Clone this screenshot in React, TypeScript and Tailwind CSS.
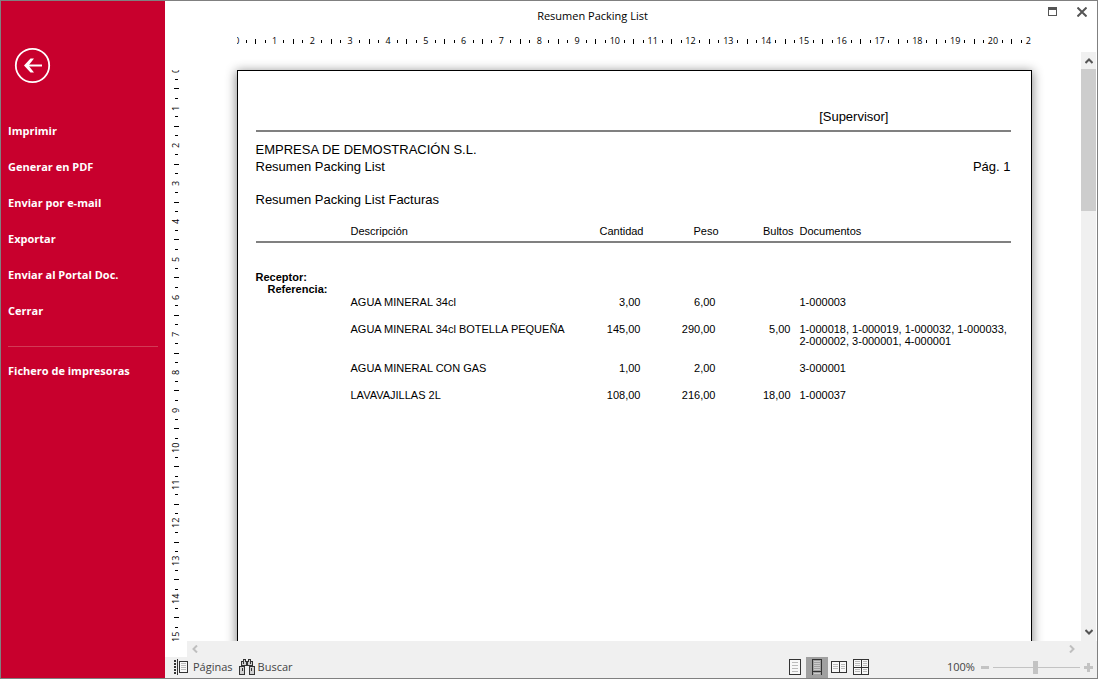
import React from "react";

const MENU = ["Imprimir", "Generar en PDF", "Enviar por e-mail", "Exportar", "Enviar al Portal Doc.", "Cerrar"];

const ROWS = [
  { desc: "AGUA MINERAL 34cl", cant: "3,00", peso: "6,00", bultos: "", docs: "1-000003" },
  {
    desc: "AGUA MINERAL 34cl BOTELLA PEQUEÑA",
    cant: "145,00",
    peso: "290,00",
    bultos: "5,00",
    docs: "1-000018, 1-000019, 1-000032, 1-000033, 2-000002, 3-000001, 4-000001",
  },
  { desc: "AGUA MINERAL CON GAS", cant: "1,00", peso: "2,00", bultos: "", docs: "3-000001" },
  { desc: "LAVAVAJILLAS 2L", cant: "108,00", peso: "216,00", bultos: "18,00", docs: "1-000037" },
];

function MenuItem({ label }: { label: string }) {
  return (
    <button type="button" className="block h-9 w-full pl-[7px] text-left text-[11px] font-bold text-white">
      {label}
    </button>
  );
}

function Sidebar() {
  return (
    <aside className="w-[164px] shrink-0 bg-[#c8002d] pt-[46px]">
      <button type="button" aria-label="Volver" className="ml-[13px] block">
        <svg width="37" height="37" viewBox="0 0 37 37" fill="none" stroke="#fff">
          <circle cx="18.5" cy="18.5" r="16.7" strokeWidth="1.8" />
          <path d="M12 18.5H28" strokeWidth="2" />
          <path d="M10 18.5L16.5 11.5H20L14.5 18.5L20 25.5H16.5Z" fill="#fff" stroke="none" />
        </svg>
      </button>
      <nav className="mt-[29px]">
        {MENU.map((m) => (
          <MenuItem key={m} label={m} />
        ))}
        <hr className="mx-[7px] mt-[17px] mb-1.5 border-[#d23a55]" />
        <MenuItem label="Fichero de impresoras" />
      </nav>
    </aside>
  );
}

const CENTIMETRES = Array.from({ length: 30 }, (_, i) => i);

function HorizontalRuler() {
  return (
    <div className="flex h-[21px] shrink-0 justify-center pr-4 pl-[22px]">
      <div className="w-[794px] shrink-0 overflow-hidden">
        <div className="-ml-[5px] flex h-5 w-[832px] text-[9px]">
          {CENTIMETRES.slice(0, 22).map((n) => (
            <div key={n} className="grid flex-1 grid-cols-4 items-center justify-items-center">
              <span className="flex w-0 justify-center">{n}</span>
              <i className="h-[3px] w-px bg-black" />
              <i className="h-[5px] w-px bg-black" />
              <i className="h-[3px] w-px bg-black" />
            </div>
          ))}
        </div>
      </div>
    </div>
  );
}

function VerticalRuler() {
  return (
    <div className="w-[22px] shrink-0 overflow-hidden pt-[18px]">
      <div className="h-full overflow-hidden">
        <div className="-mt-[5px] flex h-[1134px] flex-col text-[9px]">
          {CENTIMETRES.map((n) => (
            <div key={n} className="grid flex-1 grid-rows-4 items-center justify-items-center">
              <span className="flex h-0 rotate-180 justify-center [writing-mode:vertical-rl]">{n}</span>
              <i className="h-px w-[3px] bg-black" />
              <i className="h-px w-[5px] bg-black" />
              <i className="h-px w-[3px] bg-black" />
            </div>
          ))}
        </div>
      </div>
    </div>
  );
}

function Report() {
  return (
    <article className="h-[1123px] w-[795px] shrink-0 border border-black bg-white pt-[38px] pr-5 pl-[18px] font-['Liberation_Sans',Arial,sans-serif] text-[13px] leading-4 text-black shadow-[0_2px_10px_1px_rgba(0,0,0,0.45)]">
      <p className="pr-[122px] text-right">[Supervisor]</p>
      <hr className="mt-[5px] border-t-2 border-[#808080]" />
      <p className="mt-[10px]">EMPRESA DE DEMOSTRACIÓN S.L.</p>
      <div className="mt-px flex justify-between">
        <h2>Resumen Packing List</h2>
        <p>Pág. 1</p>
      </div>
      <h3 className="mt-[17px]">Resumen Packing List Facturas</h3>
      <table className="mt-[17px] w-full table-fixed border-collapse text-[11px] leading-3">
        <colgroup>
          <col className="w-[95px]" />
          <col className="w-[226px]" />
          <col className="w-[67px]" />
          <col className="w-[75px]" />
          <col className="w-[75px]" />
          <col />
        </colgroup>
        <thead>
          <tr className="border-b-2 border-[#808080]">
            <th className="p-0" />
            <th className="p-0 pb-1 text-left font-normal">Descripción</th>
            <th className="p-0 pb-1 text-right font-normal">Cantidad</th>
            <th className="p-0 pb-1 text-right font-normal">Peso</th>
            <th className="p-0 pb-1 text-right font-normal">Bultos</th>
            <th className="p-0 pb-1 pl-1.5 text-left font-normal">Documentos</th>
          </tr>
        </thead>
        <tbody>
          <tr>
            <th colSpan={6} className="p-0 pt-7 text-left font-bold">
              Receptor:
            </th>
          </tr>
          <tr>
            <th colSpan={6} className="p-0 pb-px pl-3 text-left font-bold">
              Referencia:
            </th>
          </tr>
          {ROWS.map((r) => (
            <tr key={r.desc} className="align-top">
              <td className="p-0" />
              <td className="p-0 pb-[15px] whitespace-nowrap">{r.desc}</td>
              <td className="p-0 pr-[3px] text-right">{r.cant}</td>
              <td className="p-0 pr-[3px] text-right">{r.peso}</td>
              <td className="p-0 pr-[3px] text-right">{r.bultos}</td>
              <td className="p-0 pb-[15px] pl-1.5">{r.docs}</td>
            </tr>
          ))}
        </tbody>
      </table>
    </article>
  );
}

function PagesIcon() {
  return (
    <svg width="15" height="16" viewBox="0 0 15 16" shapeRendering="crispEdges" fill="none">
      <path d="M1 1V15" stroke="#333" strokeWidth="2" strokeDasharray="2 1" />
      <path d="M3.5 0V16" stroke="#333" />
      <rect x="5.5" y="2.5" width="8" height="11" stroke="#333" fill="#f8f8f8" />
      <path d="M7 4.5H12M7 6.5H12M7 8.5H12M7 10.5H12" stroke="#bbb" />
    </svg>
  );
}

function BinocularsIcon() {
  return (
    <svg width="16" height="16" viewBox="0 0 16 16" shapeRendering="crispEdges" fill="#d0d0d0" stroke="#333">
      <path d="M4.5 0.5H6.5V2.5H7.5V6.5H2.5V2.5H4.5Z" />
      <path d="M9.5 0.5H11.5V2.5H13.5V6.5H8.5V2.5H9.5Z" />
      <path d="M7 3.5H9M7 5.5H9M4.5 3V5M11.5 3V5" fill="none" />
      <rect x="0.5" y="7.5" width="5" height="8" />
      <rect x="10.5" y="7.5" width="5" height="8" />
      <path d="M3.5 9V12M12.5 9V12" fill="none" />
    </svg>
  );
}

function ViewIcon({ kind }: { kind: string }) {
  if (kind === "page")
    return (
      <svg width="12" height="16" viewBox="0 0 12 16" shapeRendering="crispEdges" fill="#f8f8f8" stroke="#333">
        <rect x="0.5" y="0.5" width="11" height="15" />
        <path d="M3 3.5H9M3 6.5H9M3 9.5H9M3 12.5H9" stroke="#bbb" />
      </svg>
    );
  if (kind === "width")
    return (
      <svg width="10" height="16" viewBox="0 0 10 16" shapeRendering="crispEdges" fill="none" stroke="#333">
        <path d="M0.5 16V0.5H9.5V16M0 12.5H10" />
        <path d="M2 2.5H8M2 4.5H8M2 6.5H8M2 8.5H8M2 10.5H8M2 14.5H8" stroke="#ccc" />
      </svg>
    );
  if (kind === "two")
    return (
      <svg width="16" height="16" viewBox="0 0 16 16" shapeRendering="crispEdges" fill="#f8f8f8" stroke="#333">
        <rect x="0.5" y="2.5" width="15" height="11" />
        <path d="M8.5 3V14" />
        <path d="M2 5.5H7M2 7.5H7M2 9.5H7M10 5.5H14M10 7.5H14M10 9.5H14" stroke="#bbb" />
      </svg>
    );
  return (
    <svg width="16" height="16" viewBox="0 0 16 16" shapeRendering="crispEdges" fill="#f8f8f8" stroke="#333">
      <rect x="0.5" y="0.5" width="15" height="15" />
      <path d="M8.5 0V16M0 8.5H16" />
      <path
        d="M2 2.5H7M2 4.5H7M2 6.5H7M10 2.5H14M10 4.5H14M10 6.5H14M2 10.5H7M2 12.5H7M10 10.5H14M10 12.5H14"
        stroke="#bbb"
      />
    </svg>
  );
}

const VIEWS = [
  { kind: "page", label: "Página completa" },
  { kind: "width", label: "Ancho de página" },
  { kind: "two", label: "Dos páginas" },
  { kind: "four", label: "Cuatro páginas" },
];

function StatusBar() {
  return (
    <footer className="flex h-[21px] shrink-0 items-center bg-[#f0f0f0] pl-[9px] text-[11px] text-[#444]">
      <button type="button" className="flex items-center gap-1 pb-px">
        <PagesIcon />
        Páginas
      </button>
      <button type="button" className="ml-1.5 flex items-center gap-[3px] pb-px">
        <BinocularsIcon />
        Buscar
      </button>
      <div className="ml-auto flex h-full">
        {VIEWS.map((v) => (
          <button
            key={v.kind}
            type="button"
            aria-label={v.label}
            className={
              v.kind === "width"
                ? "flex w-[22px] items-center justify-center bg-[#a0a0a0] pb-px"
                : "flex w-[22px] items-center justify-center pb-px"
            }
          >
            <ViewIcon kind={v.kind} />
          </button>
        ))}
      </div>
      <span className="ml-[75px] w-[29px] text-[11px]">100%</span>
      <button type="button" aria-label="Reducir" className="ml-1">
        <svg width="9" height="9" viewBox="0 0 9 9" fill="#c3c3c3">
          <path d="M1 3H9V6H1Z" />
        </svg>
      </button>
      <input
        type="range"
        aria-label="Zoom"
        defaultValue={49}
        className="mx-1 h-[13px] w-[87px] appearance-none bg-transparent [&::-webkit-slider-runnable-track]:h-px [&::-webkit-slider-runnable-track]:bg-[#c3c3c3] [&::-webkit-slider-thumb]:-mt-1.5 [&::-webkit-slider-thumb]:h-[13px] [&::-webkit-slider-thumb]:w-[5px] [&::-webkit-slider-thumb]:appearance-none [&::-webkit-slider-thumb]:bg-[#c3c3c3]"
      />
      <button type="button" aria-label="Ampliar" className="mr-1">
        <svg width="9" height="9" viewBox="0 0 9 9" fill="#c3c3c3">
          <path d="M3 0H6V3H9V6H6V9H3V6H0V3H3Z" />
        </svg>
      </button>
    </footer>
  );
}

export default function App() {
  return (
    <div className="flex h-screen border border-[#808080] bg-white font-['Open_Sans','Segoe_UI',sans-serif] text-black">
      <Sidebar />
      <main className="flex min-w-0 flex-1 flex-col">
        <header className="flex h-[30px] shrink-0">
          <h1 className="flex-1 pt-[7px] pr-7 text-center text-[11px] leading-4">Resumen Packing List</h1>
          <div className="flex items-start gap-5 pt-1.5 pr-2.5">
            <button type="button" aria-label="Maximizar">
              <svg width="9" height="9" viewBox="0 0 9 9" shapeRendering="crispEdges">
                <path d="M0 0H9V9H0ZM1 3V8H8V3Z" fill="#555" fillRule="evenodd" />
              </svg>
            </button>
            <button type="button" aria-label="Cerrar ventana">
              <svg width="10" height="10" viewBox="0 0 10 10" stroke="#555" strokeWidth="2">
                <path d="M0.5 0.5L9.5 9.5M9.5 0.5L0.5 9.5" />
              </svg>
            </button>
          </div>
        </header>
        <HorizontalRuler />
        <div className="flex min-h-0 flex-1">
          <VerticalRuler />
          <div className="flex min-w-0 flex-1 justify-center overflow-hidden pt-[18px]">
            <Report />
          </div>
          <div className="mr-px flex w-[15px] shrink-0 flex-col bg-[#f0f0f0]">
            <button type="button" aria-label="Subir" className="flex h-[17px] items-center justify-center">
              <svg width="8" height="6" viewBox="0 0 8 6" fill="none" stroke="#555" strokeWidth="2">
                <path d="M0.5 5L4 1.5L7.5 5" />
              </svg>
            </button>
            <div className="h-[142px] bg-[#cdcdcd]" />
            <button type="button" aria-label="Bajar" className="mt-auto flex h-[18px] items-center justify-center">
              <svg width="8" height="6" viewBox="0 0 8 6" fill="none" stroke="#555" strokeWidth="2">
                <path d="M0.5 1L4 4.5L7.5 1" />
              </svg>
            </button>
          </div>
        </div>
        <div className="ml-[22px] flex h-4 shrink-0 items-center justify-between bg-[#f0f0f0] pr-[22px] pl-[5px]">
          <button type="button" aria-label="Izquierda">
            <svg className="block" width="6" height="8" viewBox="0 0 6 8" fill="none" stroke="#bfbfbf" strokeWidth="2">
              <path d="M5 0.5L1.5 4L5 7.5" />
            </svg>
          </button>
          <button type="button" aria-label="Derecha">
            <svg className="block" width="6" height="8" viewBox="0 0 6 8" fill="none" stroke="#bfbfbf" strokeWidth="2">
              <path d="M1 0.5L4.5 4L1 7.5" />
            </svg>
          </button>
        </div>
        <StatusBar />
      </main>
    </div>
  );
}
